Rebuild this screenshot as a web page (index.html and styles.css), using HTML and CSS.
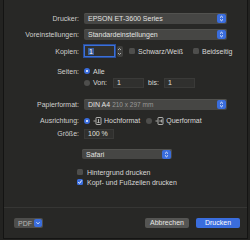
FILE: index.html
```html
<!DOCTYPE html>
<html lang="de">
<head>
    <meta charset="UTF-8">
    <meta name="viewport" content="width=device-width, initial-scale=1.0">
    <title>Drucken</title>
    <link rel="stylesheet" href="styles.css">
</head>
<body>

    <div class="sheet">
        <div class="form">
            <div class="row r1">
                <span class="lbl">Drucker:</span>
                <div class="popup wide"><span>EPSON ET-3600 Series</span><span class="arrows"><svg width="9" height="9" viewBox="0 0 9 9"><polyline points="3,3.6 4.5,2.2 6,3.6"/><polyline points="3,5.4 4.5,6.8 6,5.4"/></svg></span></div>
            </div>
            <div class="row r2">
                <span class="lbl">Voreinstellungen:</span>
                <div class="popup wide"><span>Standardeinstellungen</span><span class="arrows"><svg width="9" height="9" viewBox="0 0 9 9"><polyline points="3,3.6 4.5,2.2 6,3.6"/><polyline points="3,5.4 4.5,6.8 6,5.4"/></svg></span></div>
            </div>
            <div class="row r3">
                <span class="lbl">Kopien:</span>
                <div class="field copies focus"><span class="sel">1</span></div>
                <span class="stepper"><svg width="5" height="11" viewBox="0 0 5 11"><polyline points="1,4 2.5,2.5 4,4"/><polyline points="1,7 2.5,8.5 4,7"/></svg></span>
                <span class="check"></span><span class="txt">Schwarz/Weiß</span>
                <span class="check gap"></span><span class="txt">Beidseitig</span>
            </div>
            <div class="row r4">
                <span class="lbl">Seiten:</span>
                <span class="radio on"></span><span class="txt">Alle</span>
            </div>
            <div class="row r5">
                <span class="lbl"></span>
                <span class="radio"></span><span class="txt">Von:</span>
                <div class="field range"><span>1</span></div>
                <span class="txt bis">bis:</span>
                <div class="field range"><span>1</span></div>
            </div>
            <div class="row r6">
                <span class="lbl">Papierformat:</span>
                <div class="popup wide"><span>DIN A4 <em>210 x 297 mm</em></span><span class="arrows"><svg width="9" height="9" viewBox="0 0 9 9"><polyline points="3,3.6 4.5,2.2 6,3.6"/><polyline points="3,5.4 4.5,6.8 6,5.4"/></svg></span></div>
            </div>
            <div class="row r7">
                <span class="lbl">Ausrichtung:</span>
                <span class="radio on"></span>
                <svg class="orient" width="9" height="8" viewBox="0 0 9 8"><line x1="0.5" y1="4" x2="2.5" y2="4"/><rect x="3" y="0.5" width="5" height="7" rx="0.6"/><line x1="5.5" y1="2" x2="5.5" y2="5.5"/><line x1="4.3" y1="5.5" x2="6.7" y2="5.5"/></svg>
                <span class="txt">Hochformat</span>
                <span class="radio gap2"></span>
                <svg class="orient" width="9" height="8" viewBox="0 0 9 8"><line x1="0.5" y1="4" x2="2.5" y2="4"/><rect x="3" y="0.5" width="5" height="7" rx="0.6"/><line x1="4.3" y1="4" x2="6.7" y2="4"/><line x1="6.7" y1="2.5" x2="6.7" y2="5.5"/></svg>
                <span class="txt">Querformat</span>
            </div>
            <div class="row r8">
                <span class="lbl">Größe:</span>
                <div class="field size"><span>100 %</span></div>
            </div>
            <div class="row r9">
                <span class="lbl"></span>
                <div class="popup app"><span>Safari</span><span class="arrows"><svg width="9" height="9" viewBox="0 0 9 9"><polyline points="3,3.6 4.5,2.2 6,3.6"/><polyline points="3,5.4 4.5,6.8 6,5.4"/></svg></span></div>
            </div>
            <div class="row r10">
                <span class="check indent"></span><span class="txt">Hintergrund drucken</span>
            </div>
            <div class="row r11">
                <span class="check indent on"><svg width="6" height="6" viewBox="0 0 6 6"><polyline points="1.3,3.1 2.5,4.4 4.8,1.4"/></svg></span><span class="txt">Kopf- und Fußzeilen drucken</span>
            </div>
        </div>

        <div class="footer">
            <div class="pdf"><span>PDF</span><span class="chev"><svg width="8" height="8" viewBox="0 0 8 8"><polyline points="2.5,3.3 4,4.8 5.5,3.3"/></svg></span></div>
            <div class="spacer"></div>
            <button class="btn">Abbrechen</button>
            <button class="btn primary">Drucken</button>
        </div>
    </div>

</body>
</html>
```

FILE: styles.css
```css
html, body { margin: 0; padding: 0; background: #232321; }
body { font-family: "Liberation Sans", Arial, sans-serif; font-size: 7px; color: #d8d8d6; width: 250px; height: 240px; overflow: hidden; }
.sheet { box-sizing: border-box; margin-left: 3px; width: 245px; height: 239px; background: #282826; border-left: 1px solid #141413; border-right: 1px solid #141413; border-bottom: 1px solid #141413; display: flex; flex-direction: column; }
.form { padding-top: 13px; flex: 1; }
.row { display: flex; align-items: center; height: 11px; }
.lbl { width: 75px; flex: none; text-align: right; padding-right: 5px; box-sizing: content-box; color: #cfcfcd; }
.r2, .r3, .r7 { margin-top: 5px; }
.r3 { height: 12px; }
.r4 { margin-top: 9px; height: 10px; }
.r5 { margin-top: 1px; }
.r6 { margin-top: 11px; }
.r8 { margin-top: 2px; }
.r9 { margin-top: 10px; height: 10px; }
.r10 { margin-top: 8px; height: 10px; }
.r11 { height: 10px; }

.popup { box-sizing: border-box; height: 11px; display: flex; align-items: center; justify-content: space-between; background: #464644; border-radius: 2px; padding-left: 4px; color: #e2e2e0; box-shadow: inset 0 1px 0 #52524f; }
.popup.wide { width: 143px; }
.popup em { font-style: normal; color: #9a9a98; font-size: 6.5px; }
.popup.app { width: 90px; height: 10px; margin-left: -2px; }
.arrows { width: 9px; height: 9px; margin-right: 1px; background: #3a6ddd; border-radius: 2px; display: flex; }
.arrows svg polyline, .stepper svg polyline, .chev svg polyline { fill: none; stroke: #fff; stroke-width: 0.9; }
.stepper svg polyline { stroke: #bdbdbb; }

.field { box-sizing: border-box; height: 10px; background: #30302e; border: 1px solid #3a3a38; display: flex; align-items: center; padding-left: 3px; color: #e0e0de; }
.field.copies { width: 31px; height: 12px; border: 1px solid #3b6fd8; box-shadow: 0 0 0 1px #2a4f9a; }
.field.copies .sel { background: #3b5f9e; color: #fff; padding: 0 1px; }
.field.range { width: 31px; margin-left: 6px; height: 10px; }
.field.size { width: 30px; height: 10px; }
.stepper { width: 6px; height: 11px; background: #40403e; border-radius: 2px; margin-left: 2px; display: flex; }

.check { width: 6px; height: 6px; background: #4e4e4c; border-radius: 1.5px; margin-left: 6px; margin-right: 3px; flex: none; display: flex; }
.check.gap { margin-left: 10px; }
.check.indent { margin-left: 73px; margin-right: 4px; }
.check.on { background: #3a6ddd; }
.check.on polyline { fill: none; stroke: #fff; stroke-width: 1; }

.radio { width: 6px; height: 6px; border-radius: 50%; background: #4e4e4c; margin-right: 3px; flex: none; box-sizing: border-box; }
.radio.on { background: #3a6ddd; border: 2px solid #3a6ddd; background-color: #fff; }
.radio.gap2 { margin-left: 6px; }
.bis { margin-left: 4px; margin-right: -1px; }
.orient { flex: none; margin-right: 2px; }
.orient line, .orient rect { fill: none; stroke: #cfcfcd; stroke-width: 0.8; }

.footer { position: relative; display: flex; align-items: center; height: 30px; padding: 0 7px 0 10px; border-top: 1px solid #363634; }
.spacer { flex: 1; }
.pdf { display: flex; align-items: center; height: 10px; width: 29px; background: #4e4e4c; border-radius: 2px; padding-left: 4px; box-sizing: border-box; justify-content: space-between; color: #b8b8b6; }
.chev { width: 8px; height: 8px; background: #3a6ddd; border-radius: 2px; margin-right: 1px; display: flex; }
.btn { font-family: inherit; font-size: 7px; height: 10px; width: 44px; padding: 0; border: none; border-radius: 2px; background: #555553; color: #e6e6e4; margin-left: 7px; line-height: 10px; }
.btn.primary { background: #3a6ddd; color: #fff; }
```
